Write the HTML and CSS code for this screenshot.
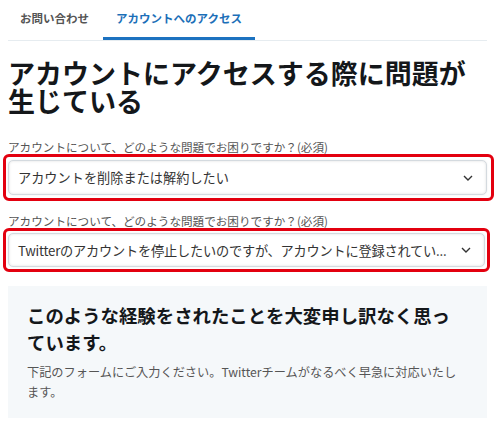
FILE: index.html
```html
<!DOCTYPE html>
<html lang="ja">
<head>
<meta charset="utf-8">
<link rel="stylesheet" href="styles.css">
</head>
<body>
<div class="page">
  <nav class="tabs">
    <a class="tab">お問い合わせ</a>
    <a class="tab active">アカウントへのアクセス</a>
  </nav>
  <h1 class="title">アカウントにアクセスする際に問題が生じている</h1>
  <label class="label">アカウントについて、どのような問題でお困りですか？(必須)</label>
  <div class="mark mark-1">
    <div class="select">
      <span class="select-text">アカウントを削除または解約したい</span>
      <svg class="chev" width="10" height="6" viewBox="0 0 10 6"><path d="M1 1l4 4 4-4" fill="none" stroke="#333" stroke-width="1.4"/></svg>
    </div>
  </div>
  <label class="label label-2">アカウントについて、どのような問題でお困りですか？(必須)</label>
  <div class="mark mark-2">
    <div class="select select-2">
      <span class="select-text select-text-2">Twitterのアカウントを停止したいのですが、アカウントに登録されてい...</span>
      <svg class="chev" width="10" height="6" viewBox="0 0 10 6"><path d="M1 1l4 4 4-4" fill="none" stroke="#333" stroke-width="1.4"/></svg>
    </div>
  </div>
  <section class="info">
    <h2 class="info-title">このような経験をされたことを大変申し訳なく思っています。</h2>
    <p class="info-text">下記のフォームにご入力ください。Twitterチームがなるべく早急に対応いたします。</p>
  </section>
</div>
</body>
</html>
```
FILE: styles.css
```css
* { box-sizing: border-box; }
html, body { margin: 0; padding: 0; background: #fff; }
body {
  font-family: "Noto Sans CJK JP", "Noto Sans", sans-serif;
  color: #14171a;
}
.page {
  width: 479px;
  margin-left: 8px;
}
.tabs {
  display: flex;
  height: 41px;
  border-bottom: 1px solid #e6ecf0;
}
.tab {
  display: flex;
  align-items: center;
  height: 40px;
  padding: 0 12px 4px;
  font-size: 11.5px;
  font-weight: 700;
  color: #555;
}
.tab.active {
  margin-left: 2px;
  padding: 0 13px 1px;
  color: #1c6fb8;
  border-bottom: 3px solid #1c72c0;
}
.title {
  margin: 18px 0 0;
  font-size: 27px;
  line-height: 28px;
  font-weight: 700;
  color: #14171a;
}
.label {
  display: block;
  margin-top: 25px;
  font-size: 11.6px;
  line-height: 14px;
  color: #555;
}
.label-2 { margin-top: 13px; }
.mark {
  border: 3px solid #e3000f;
  border-radius: 6px;
  margin-left: -5px;
}
.mark-1 { margin-right: -7px; padding: 3px 4px 3px 2px; }
.mark-2 { margin-right: -3px; padding: 2px; }
.select {
  display: flex;
  align-items: center;
  height: 35px;
  padding: 0 13px 0 9px;
  border: 1px solid #d4dadf;
  border-radius: 5px;
  background: #fff;
  box-shadow: inset 0 0 3px rgba(0,0,0,0.12), 0 0 2px rgba(0,0,0,0.08);
}
.select-2 { height: 34px; }
.select-text {
  flex: 1;
  min-width: 0;
  white-space: nowrap;
  font-size: 13.2px;
  color: #333;
  padding-right: 8px;
}
.select-text-2 { letter-spacing: -0.2px; }
.chev { flex: none; }
.info {
  margin-top: 14px;
  background: #f5f8fa;
  padding: 16px 20px 16px 19px;
}
.info-title {
  margin: 0;
  font-size: 18.4px;
  line-height: 26.5px;
  font-weight: 700;
  color: #14171a;
}
.info-text {
  margin: 8px 0 0;
  font-size: 12.2px;
  line-height: 19.5px;
  color: #555;
}
```
